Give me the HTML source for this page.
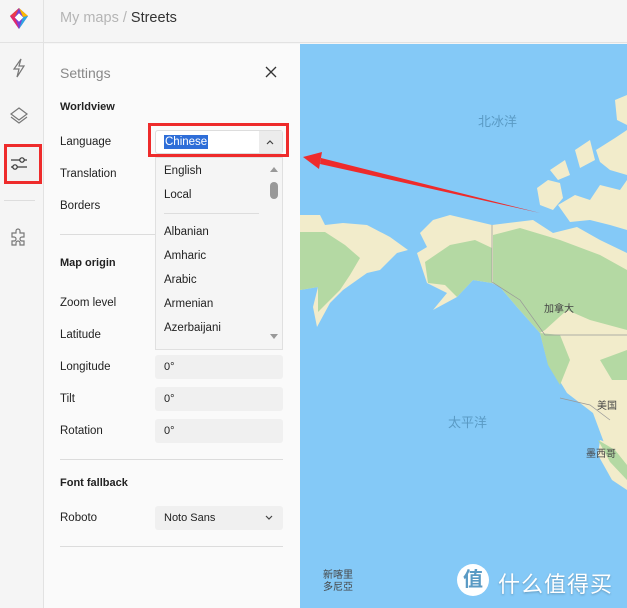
<!DOCTYPE html>
<html><head><meta charset="utf-8"><style>
*{margin:0;padding:0;box-sizing:border-box}
body{width:627px;height:608px;overflow:hidden;font-family:"Liberation Sans","Noto Sans CJK SC",sans-serif;background:#f5f5f5;position:relative;color:#222}
.abs{position:absolute}
.top{left:0;top:0;width:627px;height:43px;background:#f5f5f5;border-bottom:1px solid #e2e2e2}
.rail{left:0;top:0;width:44px;height:608px;border-right:1px solid #e2e2e2}
.panel{left:44px;top:44px;width:256px;height:564px;background:#fafafa}
.lbl{left:60px;font-size:11.5px;color:#222}
.b{font-weight:bold;font-size:11px}
.inp{left:155px;width:128px;height:24px;background:#f0f0f0;border-radius:3px;font-size:11px;padding:6px 0 0 9px}
.hr{left:60px;width:223px;height:1px;background:#dcdcdc}
.map{left:300px;top:44px;width:327px;height:564px;background:#84c9f7;overflow:hidden}
.dd{font-size:11.5px;left:164px}
</style></head><body>
<div class="abs top"></div>
<div class="abs rail"></div>
<svg class="abs" style="left:8px;top:7px" width="22" height="24" viewBox="0 0 22 24">
<path d="M11 1 L20 9 L11 22 L2 9 Z" fill="#7b3fd6"/>
<path d="M11 1 L20 9 L15 10 Z" fill="#fbb900"/>
<path d="M11 1 L2 9 L7 10 Z" fill="#ee3b4a"/>
<path d="M2 9 L11 22 L7 10Z" fill="#e4286d"/>
<path d="M20 9 L11 22 L15 10Z" fill="#2ca7e0"/>
<rect x="8" y="7.5" width="6" height="6" transform="rotate(45 11 10.5)" fill="#fff"/>
</svg>
<div class="abs" style="left:60px;top:10px;font-size:14.5px;color:#b5b5b5">My maps / <span style="color:#333">Streets</span></div>
<svg class="abs" style="left:10px;top:58px" width="18" height="20" viewBox="0 0 18 20" fill="none" stroke="#777" stroke-width="1.2"><path d="M11 1 L4 11 H9 L7 19 L14 8 H9 Z"/></svg>
<svg class="abs" style="left:9px;top:106px" width="20" height="20" viewBox="0 0 20 20" fill="none" stroke="#777" stroke-width="1.2"><path d="M10 2 L18 8 L10 14 L2 8Z"/><path d="M2 11 L10 17 L18 11"/></svg>
<div class="abs" style="left:4px;top:144px;width:38px;height:40px;border:3px solid #ee2b2b;background:#f2f2f2"></div>
<svg class="abs" style="left:10px;top:154px" width="20" height="20" viewBox="0 0 20 20" fill="none" stroke="#333" stroke-width="1.2"><path d="M1 6 H17"/><circle cx="12" cy="6" r="2.2" fill="#f2f2f2"/><path d="M1 13 H17"/><circle cx="5" cy="13" r="2.2" fill="#f2f2f2"/></svg>
<div class="abs" style="left:4px;top:200px;width:31px;height:1px;background:#ddd"></div>
<svg class="abs" style="left:9px;top:227px" width="20" height="20" viewBox="0 0 20 20" fill="none" stroke="#777" stroke-width="1.2"><path d="M3 6 H7 V4 A2 2 0 0 1 11 4 V6 H15 V10 H13 A2 2 0 0 0 13 14 H15 V18 H11 V16 A2 2 0 0 0 7 16 V18 H3 V14 H5 A2 2 0 0 0 5 10 H3 Z"/></svg>
<div class="abs panel"></div>
<div class="abs" style="left:60px;top:65px;font-size:14px;color:#888">Settings</div>
<svg class="abs" style="left:265px;top:66px" width="12" height="12" viewBox="0 0 12 12" stroke="#333" stroke-width="1.3"><path d="M1 1L11 11M11 1L1 11"/></svg>
<div class="abs lbl b" style="top:101px">Worldview</div>
<div class="abs lbl" style="top:136px">Language</div>
<div class="abs lbl" style="top:168px">Translation</div>
<div class="abs lbl" style="top:200px">Borders</div>
<div class="abs hr" style="top:234px"></div>
<div class="abs lbl b" style="top:257px">Map origin</div>
<div class="abs lbl" style="top:297px">Zoom level</div>
<div class="abs lbl" style="top:329px">Latitude</div>
<div class="abs lbl" style="top:361px">Longitude</div>
<div class="abs lbl" style="top:393px">Tilt</div>
<div class="abs lbl" style="top:425px">Rotation</div>
<div class="abs inp" style="top:355px">0°</div>
<div class="abs inp" style="top:387px">0°</div>
<div class="abs inp" style="top:419px">0°</div>
<div class="abs hr" style="top:459px"></div>
<div class="abs lbl b" style="top:477px">Font fallback</div>
<div class="abs lbl" style="top:512px">Roboto</div>
<div class="abs inp" style="top:506px">Noto Sans</div>
<svg class="abs" style="left:265px;top:515px" width="8" height="6" viewBox="0 0 8 6" fill="none" stroke="#444" stroke-width="1.2"><path d="M1 1L4 4L7 1"/></svg>
<div class="abs hr" style="top:546px"></div>
<div class="abs" style="left:155px;top:157px;width:128px;height:193px;background:#f5f5f5;border:1px solid #e0e0e0;overflow:hidden"></div>
<div class="abs dd" style="top:165px">English</div>
<div class="abs dd" style="top:189px">Local</div>
<div class="abs" style="left:164px;top:213px;width:95px;height:1px;background:#ddd"></div>
<div class="abs dd" style="top:226px">Albanian</div>
<div class="abs dd" style="top:250px">Amharic</div>
<div class="abs dd" style="top:274px">Arabic</div>
<div class="abs dd" style="top:298px">Armenian</div>
<div class="abs dd" style="top:322px">Azerbaijani</div>
<div class="abs" style="left:270px;top:167px;width:0;height:0;border-left:4px solid transparent;border-right:4px solid transparent;border-bottom:5px solid #999"></div>
<div class="abs" style="left:270px;top:182px;width:8px;height:17px;background:#999;border-radius:4px"></div>
<div class="abs" style="left:270px;top:334px;width:0;height:0;border-left:4px solid transparent;border-right:4px solid transparent;border-top:5px solid #999"></div>
<div class="abs" style="left:148px;top:123px;width:141px;height:34px;border:3px solid #ee2b2b"></div>
<div class="abs" style="left:155px;top:130px;width:128px;height:24px;background:#fff;border:1px solid #ddd;border-radius:3px"></div>
<div class="abs" style="left:259px;top:131px;width:23px;height:22px;background:#ececec"></div>
<svg class="abs" style="left:266px;top:139px" width="8" height="6" viewBox="0 0 8 6" fill="none" stroke="#444" stroke-width="1.2"><path d="M1 5L4 2L7 5"/></svg>
<div class="abs" style="left:164px;top:135px;height:14px;background:#2e6ed8;color:#fff;font-size:11.5px;padding:0 1px;line-height:14px">Chinese</div>
<div class="abs map">
<svg width="327" height="564" viewBox="300 44 327 564">
<g fill="#f2eccb">
<path d="M300 215 L320 215 L325 225 L343 223 L367 225 L390 237 L408 250 L397 253 L380 270 L367 273 L343 290 L330 303 L317 327 L313 307 L318 287 L300 290Z"/>
<path d="M420 233 L433 220 L450 215 L492 225 L533 220 L553 233 L577 227 L600 240 L627 253 L627 470 L618 462 L606 448 L593 413 L567 393 L547 360 L540 333 L517 307 L500 287 L492 283 L473 280 L457 297 L433 310 L447 293 L427 283 L417 253 L427 247Z"/>
<path d="M600 440 L627 450 L627 490 L612 480 L598 455Z"/>
<path d="M537 188 L548 180 L560 183 L563 198 L553 210 L540 205Z"/>
<path d="M558 205 L575 195 L590 200 L600 185 L620 190 L627 180 L627 230 L610 225 L590 220 L570 222Z"/>
<path d="M596 150 L615 138 L627 130 L627 175 L610 170 L600 162Z"/>
<path d="M575 150 L590 140 L595 160 L580 168Z"/>
<path d="M550 170 L565 160 L570 175 L558 180Z"/>
<path d="M615 100 L627 95 L627 125 L617 120Z"/>
</g>
<g fill="#b4d9a3">
<path d="M300 232 L325 232 L345 245 L360 258 L350 275 L340 290 L330 300 L318 312 L318 287 L300 290Z"/>
<path d="M493 235 L520 228 L560 240 L600 255 L627 270 L627 330 L590 320 L567 310 L545 330 L540 333 L517 307 L500 287 L493 283Z"/>
<path d="M425 262 L450 245 L475 240 L492 248 L492 283 L473 280 L457 297 L445 285 L428 283Z"/>
<path d="M540 333 L560 335 L570 360 L560 385 L548 365Z"/>
<path d="M600 360 L627 350 L627 380 L612 380Z"/>
<path d="M598 440 L615 450 L627 465 L627 480 L610 462Z"/>
</g>
<path d="M492 225 V282 L520 300 L545 335 H627" fill="none" stroke="#999" stroke-width="0.7"/>
<path d="M560 398 L590 405 L610 420" fill="none" stroke="#999" stroke-width="0.7"/>
<path d="M540 213 L321 158 L320 164 Z" fill="#ee2b2b"/>
<path d="M303 157 L322 152 L319 169 Z" fill="#ee2b2b"/>
</svg>
<div class="abs" style="left:178px;top:67px;font-size:13px;color:#5a9ac4">北冰洋</div>
<div class="abs" style="left:148px;top:368px;font-size:13px;color:#5a9ac4">太平洋</div>
<div class="abs" style="left:244px;top:256px;font-size:10px;color:#444">加拿大</div>
<div class="abs" style="left:297px;top:353px;font-size:10px;color:#444">美国</div>
<div class="abs" style="left:286px;top:401px;font-size:10px;color:#444">墨西哥</div>
<div class="abs" style="left:23px;top:526px;font-size:10px;color:#444;line-height:12px">新喀里<br>多尼亞</div>
<div class="abs" style="left:157px;top:520px;width:32px;height:32px;border-radius:50%;background:#fff;color:#5a9ac4;font-size:20px;text-align:center;line-height:32px;font-weight:bold">值</div>
<div class="abs" style="left:198px;top:523px;font-size:22px;color:#fff;letter-spacing:1px;text-shadow:0 1px 2px rgba(0,0,0,.25)">什么值得买</div>
</div>
</body></html>
